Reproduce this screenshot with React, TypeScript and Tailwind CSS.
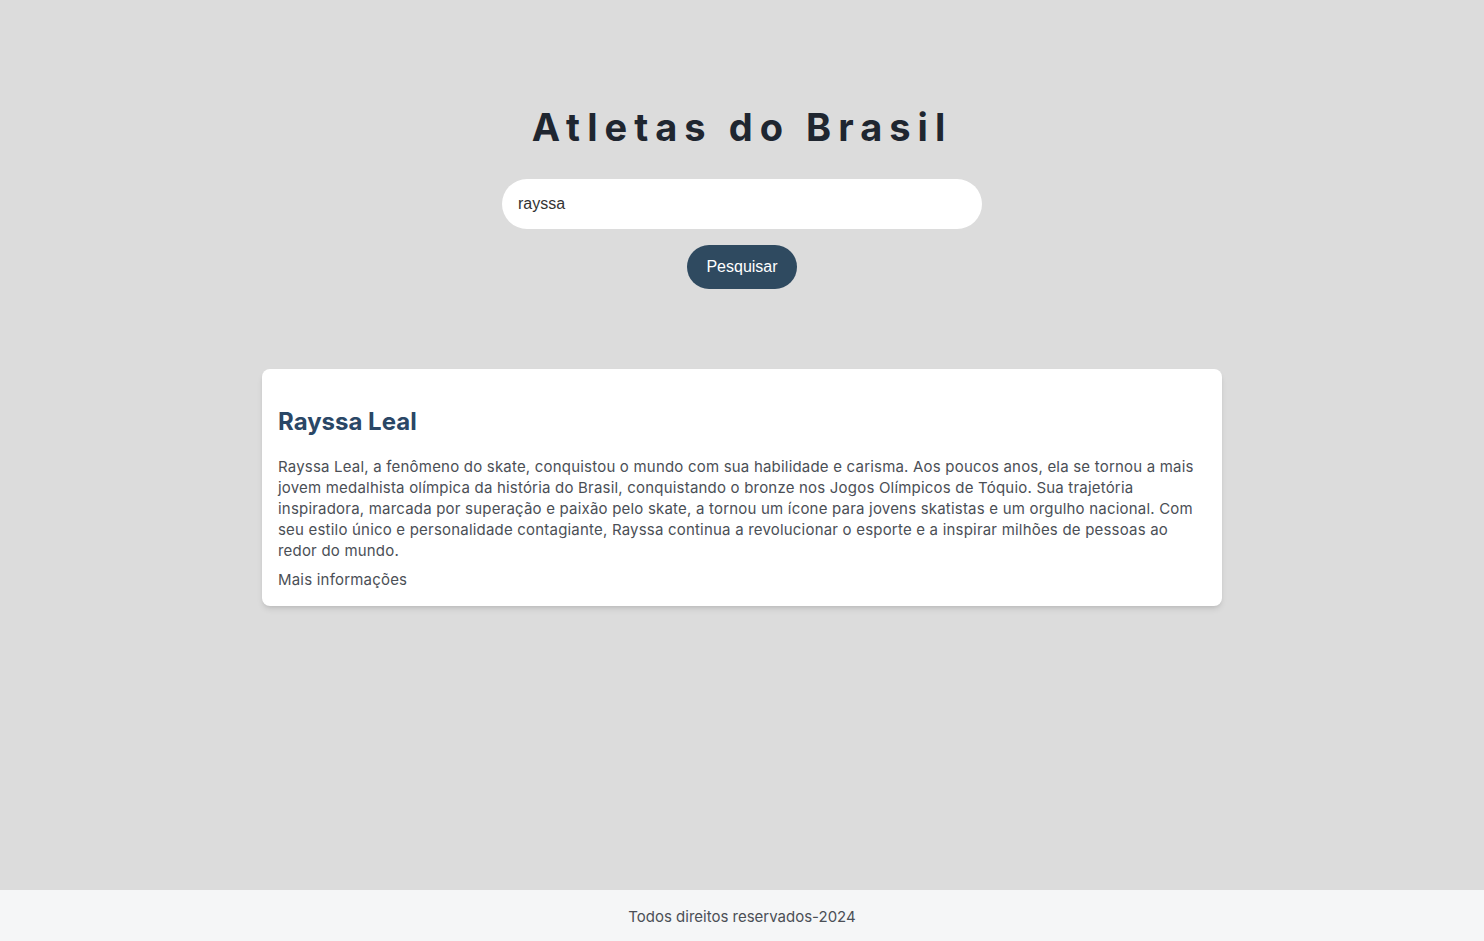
export default function App() {
    return (
        <div className="min-h-screen flex flex-col bg-[#dcdcdc]" style={{ fontFamily: "Inter, 'Noto Sans', sans-serif" }}>
            <main className="flex-1 flex flex-col items-center">
                {/* Header with search */}
                <div className="flex flex-col items-center pt-[100px]">
                    <h1 className="text-[38px] leading-[54px] font-bold tracking-[0.185em] text-[#1f2630]">Atletas do Brasil</h1>
                    <input
                        type="text"
                        defaultValue="rayssa"
                        className="mt-[25px] w-[480px] h-[50px] rounded-full bg-white px-4 text-base text-[#333] outline-none"
                        style={{ fontFamily: "'Liberation Sans', Arial, sans-serif" }}
                    />
                    <button
                        className="mt-4 w-[110px] h-[44px] rounded-full bg-[#2f4a60] text-white text-base"
                        style={{ fontFamily: "'Liberation Sans', Arial, sans-serif" }}
                    >
                        Pesquisar
                    </button>
                </div>

                <section className="mt-[80px] w-[960px] bg-white rounded-lg shadow-md px-4 pt-[37px] pb-4">
                    <h2 className="text-2xl font-bold text-[#2a4766]">Rayssa Leal</h2>
                    <p className="mt-[18px] text-[15px] leading-[21px] tracking-[0.2px] text-[#4b4f56]">
                        Rayssa Leal, a fenômeno do skate, conquistou o mundo com sua habilidade e carisma. Aos poucos anos, ela se tornou a mais jovem medalhista olímpica da história do Brasil, conquistando o bronze nos Jogos Olímpicos de Tóquio. Sua trajetória inspiradora, marcada por superação e paixão pelo skate, a tornou um ícone para jovens skatistas e um orgulho nacional. Com seu estilo único e personalidade contagiante, Rayssa continua a revolucionar o esporte e a inspirar milhões de pessoas ao redor do mundo.
                    </p>
                    <a href="#" className="block mt-2 text-[15px] leading-[21px] tracking-[0.2px] text-[#4b4f56]">Mais informações</a>
                </section>
            </main>

            <footer className="h-[51px] bg-[#f5f6f7] flex items-center justify-center pt-1 text-[15px] text-[#4b4f56]">
                Todos direitos reservados-2024
            </footer>
        </div>
    );
}
